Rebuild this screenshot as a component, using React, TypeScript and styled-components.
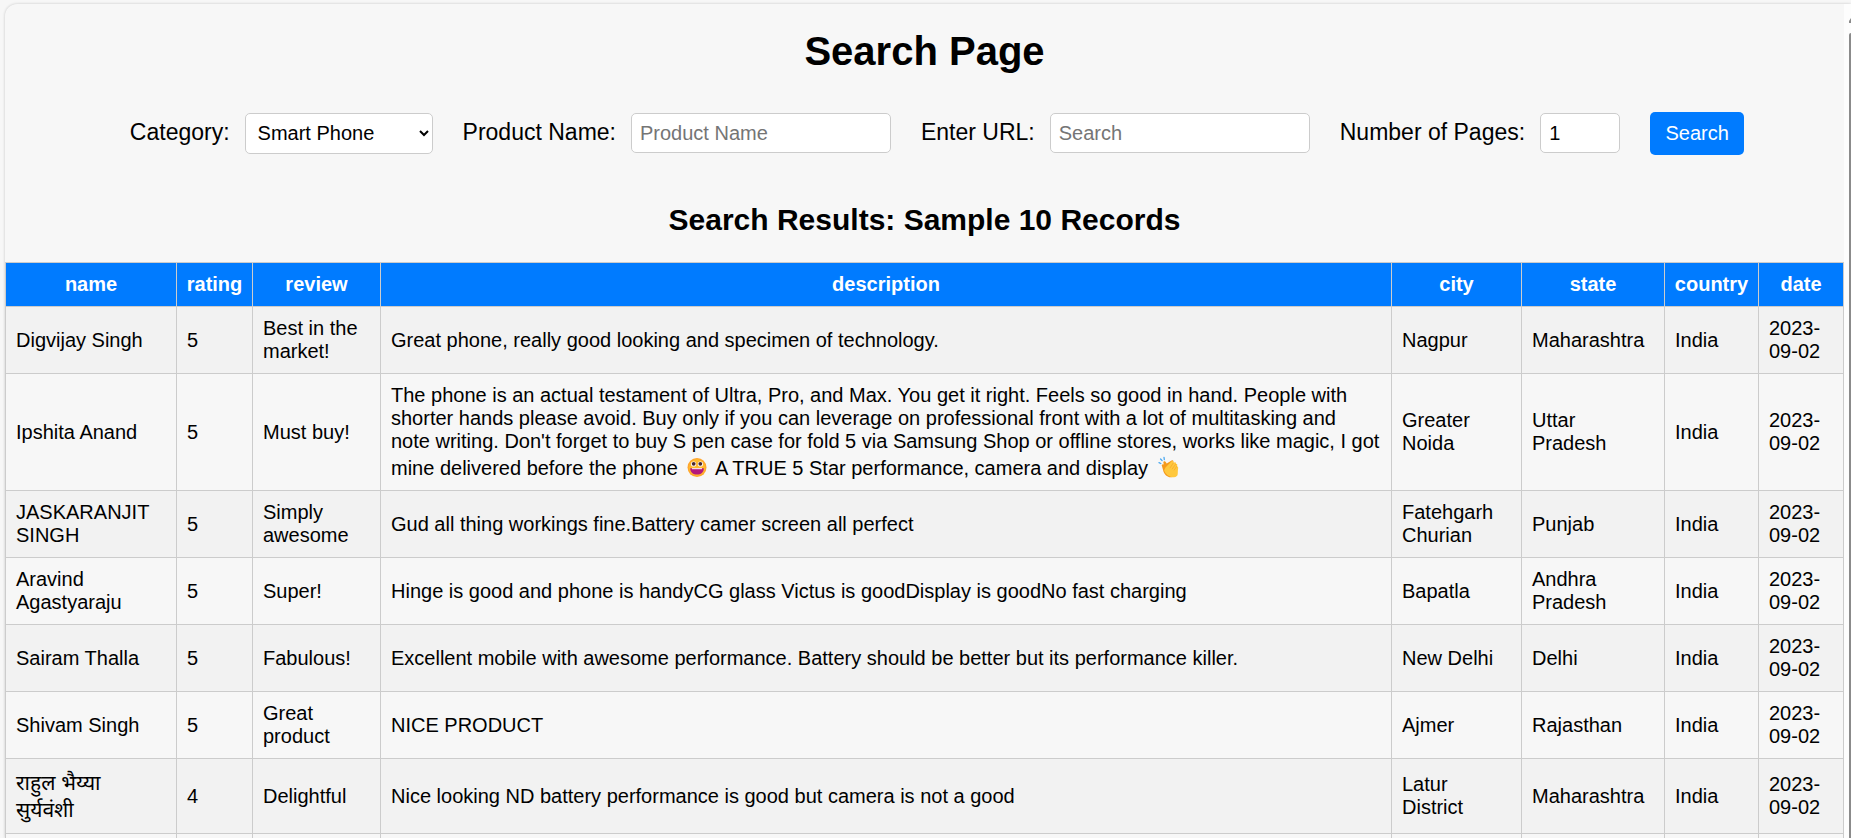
import React from "react";
import styled, { createGlobalStyle } from "styled-components";

const GlobalStyle = createGlobalStyle`
  *, *::before, *::after { box-sizing: border-box; }
  body {
    margin: 0;
    background: #f7f7f7;
    color: #000;
    font-family: Arial, "Liberation Sans", "Noto Sans Devanagari", "Noto Sans", sans-serif;
    font-size: 20px;
    line-height: 23px;
  }
`;

const Viewport = styled.div`
  display: flex;
  height: 100vh;
  padding: 4px 0 0 5px;
  overflow: hidden;
`;

const Panel = styled.div`
  display: flex;
  flex: 1;
  min-width: 0;
  overflow: hidden;
  background: #f7f7f7;
  border-radius: 12px 0 0 0;
  box-shadow: 0 0 3px rgba(0, 0, 0, 0.2);
`;

const Content = styled.main`
  flex: 1;
  min-width: 0;
  padding-top: 24px;
`;

const ScrollTrack = styled.div`
  display: flex;
  flex-direction: column;
  align-items: flex-end;
  gap: 9px;
  width: 7px;
  padding-top: 14px;
  background: #fdfdfd;
`;

const ScrollThumb = styled.div`
  flex: 1;
  width: 2px;
  border-radius: 2px 0 0 0;
  background: #8b8b8b;
`;

const PageTitle = styled.h1`
  margin: 0;
  font-size: 40px;
  line-height: 46px;
  text-align: center;
`;

const SearchForm = styled.form`
  display: flex;
  flex-wrap: wrap;
  align-items: baseline;
  justify-content: center;
  gap: 30px;
  margin: 38px 0 48px;
  padding-left: 25px;
`;

const Field = styled.div`
  display: flex;
  align-items: baseline;
  gap: 15px;
`;

const Label = styled.label`
  font-size: 23px;
  line-height: 26px;
  white-space: nowrap;
`;

const TextInput = styled.input<{ $width: number }>`
  width: ${(p) => p.$width}px;
  height: 40px;
  padding: 1px 8px 0;
  border: 1px solid #ccc;
  border-radius: 5px;
  background: #fff;
  color: #000;
  font: inherit;

  &::placeholder { color: #757575; }
`;

const Select = styled.select`
  width: 188px;
  height: 41px;
  padding: 0 8px;
  border: 1px solid #ccc;
  border-radius: 5px;
  background: #fff;
  color: #000;
  font: inherit;
`;

const SearchButton = styled.button`
  height: 43px;
  width: 94px;
  padding: 0;
  border: 0;
  border-radius: 5px;
  background: #007bff;
  color: #fff;
  font: inherit;
`;

const ResultsTitle = styled.h2`
  margin: 0 0 25px;
  font-size: 30px;
  line-height: 34px;
  text-align: center;
`;

const Table = styled.table`
  width: 100%;
  border-collapse: collapse;
  table-layout: fixed;
`;

const Col = styled.col<{ $width?: number }>`
  width: ${(p) => (p.$width ? `${p.$width}px` : "auto")};
`;

const HeadCell = styled.th`
  padding: 10px 0;
  border: 1px solid #ccc;
  background: #007bff;
  color: #fff;
  text-align: center;
`;

const Row = styled.tr`
  &:nth-child(odd) { background: #f2f2f2; }
`;

const Cell = styled.td`
  height: 44px;
  padding: 10px;
  border: 1px solid #ccc;
  text-align: left;
  vertical-align: middle;
`;

const HindiName = styled.span`
  display: block;
  font-size: 21px;
  line-height: 27px;
`;

const EmojiSvg = styled.svg`
  width: 27px;
  height: 27px;
  vertical-align: -5px;
`;

const GrinEmoji = () => (
  <EmojiSvg viewBox="-1 -1 27 27" role="img" aria-label="grinning face">
    <circle cx="13" cy="13.5" r="9.5" fill="#ffa52e" />
    <circle cx="13" cy="13.5" r="8.2" fill="#ffb92f" />
    <circle cx="9.6" cy="10" r="2.6" fill="#fff" />
    <circle cx="16.4" cy="10" r="2.6" fill="#fff" />
    <circle cx="9.7" cy="9.8" r="1.9" fill="#4a2730" />
    <circle cx="16.3" cy="9.8" r="1.9" fill="#4a2730" />
    <path d="M6.2 14.2h13.6c0 4-2.8 6.4-6.8 6.4s-6.8-2.4-6.8-6.4z" fill="#b4187c" />
    <path d="M8 14.2h10v1H8z" fill="#fff" />
  </EmojiSvg>
);

const ClapEmoji = () => (
  <EmojiSvg viewBox="-1 -1 27 27" role="img" aria-label="clapping hands">
    <path d="M4 8.6l1.8.9M5.6 5l1.5 1.6M9 3.4l.3 2.1" stroke="#4aa8f0" strokeWidth="1.3" strokeLinecap="round" />
    <path d="M7 12.2c-1-1.5.8-2.8 1.9-1.6l-.5-1.5c-.5-1.7 1.5-2.4 2.3-1l1 1.5 4.9-3.2c1.5-.8 2.4.9 1.4 1.9l4 2-1.5 12-4.2 1c-3.3.5-6.3-2.2-7.7-5.2z" fill="#f59a1c" />
    <path d="M10.5 13.5l5.9-6c1.2-1.1 2.8.2 1.9 1.5l1.2-.6c1.3-.5 2.1.8 1.2 1.8 1.4-.5 2.2.7 1.3 1.8l-.4.6c2-.6 1.7 1.7 1.3 3.3l-.2 4.4c-.1 1.7-1.8 3.1-3.9 3-4.5 0-8.7-3.4-9.7-7.1z" fill="#ffc83d" />
    <path d="M14.8 14.2l3.5-5.2M17 15.2l3.7-5M19 16.3l3-4.3" stroke="#f3a52b" strokeWidth=".7" />
  </EmojiSvg>
);

type Review = {
  name: React.ReactNode;
  rating: number;
  review: string;
  description: React.ReactNode;
  city: string;
  state: string;
};

const reviews: Review[] = [
  { name: "Digvijay Singh", rating: 5, review: "Best in the market!", description: "Great phone, really good looking and specimen of technology.", city: "Nagpur", state: "Maharashtra" },
  {
    name: "Ipshita Anand",
    rating: 5,
    review: "Must buy!",
    description: (
      <>
        The phone is an actual testament of Ultra, Pro, and Max. You get it right. Feels so good in hand. People with
        shorter hands please avoid. Buy only if you can leverage on professional front with a lot of multitasking and
        {" "}note&nbsp;writing. Don't forget to buy S pen case for fold 5 via Samsung Shop or offline stores, works like
        magic, I got mine delivered before the phone <GrinEmoji /> A TRUE 5 Star performance, camera and
        display <ClapEmoji />
      </>
    ),
    city: "Greater Noida",
    state: "Uttar Pradesh",
  },
  { name: "JASKARANJIT SINGH", rating: 5, review: "Simply awesome", description: "Gud all thing workings fine.Battery camer screen all perfect", city: "Fatehgarh Churian", state: "Punjab" },
  { name: "Aravind Agastyaraju", rating: 5, review: "Super!", description: "Hinge is good and phone is handyCG glass Victus is goodDisplay is goodNo fast charging", city: "Bapatla", state: "Andhra Pradesh" },
  { name: "Sairam Thalla", rating: 5, review: "Fabulous!", description: "Excellent mobile with awesome performance. Battery should be better but its performance killer.", city: "New Delhi", state: "Delhi" },
  { name: "Shivam Singh", rating: 5, review: "Great product", description: "NICE PRODUCT", city: "Ajmer", state: "Rajasthan" },
  {
    name: (
      <HindiName lang="hi">
        राहुल भैय्या
        <br />
        सुर्यवंशी
      </HindiName>
    ),
    rating: 4,
    review: "Delightful",
    description: "Nice looking ND battery performance is good but camera is not a good",
    city: "Latur District",
    state: "Maharashtra",
  },
];

const columns: { title: string; width?: number }[] = [
  { title: "name", width: 171 },
  { title: "rating", width: 76 },
  { title: "review", width: 128 },
  { title: "description" },
  { title: "city", width: 130 },
  { title: "state", width: 143 },
  { title: "country", width: 94 },
  { title: "date", width: 85 },
];

export default function App() {
  return (
    <>
      <GlobalStyle />
      <Viewport>
        <Panel>
          <Content>
            <PageTitle>Search Page</PageTitle>
            <SearchForm onSubmit={(e) => e.preventDefault()}>
              <Field>
                <Label htmlFor="category">Category:</Label>
                <Select id="category">
                  <option>Smart Phone</option>
                </Select>
              </Field>
              <Field>
                <Label htmlFor="product">Product Name:</Label>
                <TextInput id="product" type="text" placeholder="Product Name" $width={260} />
              </Field>
              <Field>
                <Label htmlFor="url">Enter URL:</Label>
                <TextInput id="url" type="text" placeholder="Search" $width={260} />
              </Field>
              <Field>
                <Label htmlFor="pages">Number of Pages:</Label>
                <TextInput id="pages" type="number" defaultValue={1} min={1} $width={80} />
              </Field>
              <SearchButton type="submit">Search</SearchButton>
            </SearchForm>
            <ResultsTitle>Search Results: Sample 10 Records</ResultsTitle>
            <Table>
              <colgroup>
                {columns.map((c) => (
                  <Col key={c.title} $width={c.width} />
                ))}
              </colgroup>
              <thead>
                <tr>
                  {columns.map((c) => (
                    <HeadCell key={c.title} scope="col">{c.title}</HeadCell>
                  ))}
                </tr>
              </thead>
              <tbody>
                {reviews.map((r, i) => (
                  <Row key={i}>
                    <Cell>{r.name}</Cell>
                    <Cell>{r.rating}</Cell>
                    <Cell>{r.review}</Cell>
                    <Cell>{r.description}</Cell>
                    <Cell>{r.city}</Cell>
                    <Cell>{r.state}</Cell>
                    <Cell>India</Cell>
                    <Cell>2023-09-02</Cell>
                  </Row>
                ))}
                <Row>
                  {columns.map((c) => (
                    <Cell key={c.title} />
                  ))}
                </Row>
              </tbody>
            </Table>
          </Content>
          <ScrollTrack aria-hidden="true">
            <svg width="2" height="6" viewBox="0 0 2 6">
              <path d="M2 0v5H0V3z" fill="#8b8b8b" />
            </svg>
            <ScrollThumb />
          </ScrollTrack>
        </Panel>
      </Viewport>
    </>
  );
}
